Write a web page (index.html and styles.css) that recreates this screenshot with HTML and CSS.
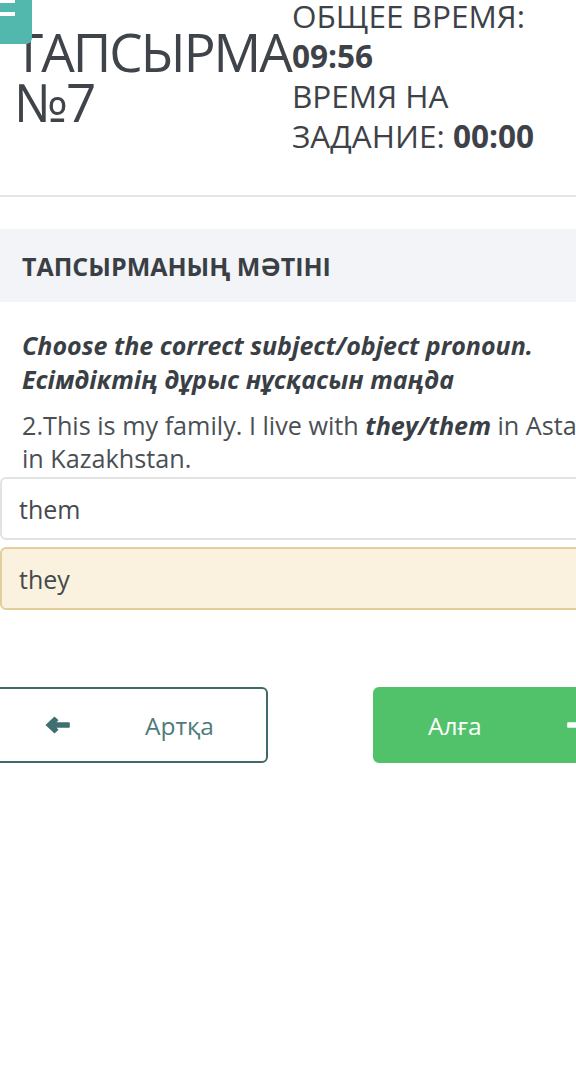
FILE: index.html
```html
<!DOCTYPE html>
<html lang="kk">
<head>
<meta charset="utf-8">
<title>Тапсырма №7</title>
<link rel="stylesheet" href="styles.css">
</head>
<body>
<button class="menu-btn" aria-label="Menu"><span class="bar bar-a"></span><span class="bar bar-b"></span></button>
<div class="page">
  <header class="header">
    <h1 class="title">ТАПСЫРМА №7</h1>
    <div class="timers">
      <div>ОБЩЕЕ ВРЕМЯ: <b>09:56</b></div>
      <div>ВРЕМЯ НА ЗАДАНИЕ: <b>00:00</b></div>
    </div>
  </header>

  <section class="task">
    <div class="task-head">ТАПСЫРМАНЫҢ МӘТІНІ</div>
    <p class="instruction">Choose the correct subject/object pronoun.<br>Есімдіктің дұрыс нұсқасын таңда</p>
    <p class="question">2.This is my family. I live with <b><i>they/them</i></b> in Astana in Kazakhstan.</p>
  </section>

  <div class="options">
    <div class="option">them</div>
    <div class="option selected">they</div>
  </div>

  <div class="nav">
    <button class="btn btn-back">
      <svg class="arrow" width="25" height="18" viewBox="0 0 25 18"><path d="M1.5 9 L9.5 1.5 L12.5 4.3 L9 7 H24 V11 H9 L12.5 13.7 L9.5 16.5 Z" fill="#3f6f71" stroke="#3f6f71" stroke-width="1.6" stroke-linejoin="round"/></svg>
      <span>Артқа</span>
    </button>
    <button class="btn btn-next">
      <span>Алға</span>
      <svg class="arrow" width="25" height="18" viewBox="0 0 25 18"><path d="M23.5 9 L15.5 1.5 L12.5 4.3 L16 7 H1 V11 H16 L12.5 13.7 L15.5 16.5 Z" fill="#ffffff" stroke="#ffffff" stroke-width="1.6" stroke-linejoin="round"/></svg>
    </button>
  </div>
</div>
</body>
</html>
```

FILE: styles.css
```css
html, body {
  margin: 0;
  padding: 0;
  background: #ffffff;
  overflow: hidden;
}
body {
  font-family: "Open Sans", "Noto Sans", sans-serif;
  color: #3d4248;
  width: 576px;
  height: 1074px;
}
.page {
  width: 640px;
}
.menu-btn {
  position: absolute;
  top: 0;
  left: 0;
  width: 32px;
  height: 44px;
  padding: 0;
  border: 0;
  background: #52b8ae;
  border-bottom-right-radius: 6px;
  z-index: 5;
}
.menu-btn .bar {
  position: absolute;
  left: 0;
  width: 15px;
  background: #ffffff;
}
.bar-a { top: 0; height: 3px; }
.bar-b { top: 12px; height: 4px; }

.header {
  display: grid;
  grid-template-columns: 278px 270px;
  padding-left: 14px;
  height: 195px;
  border-bottom: 2px solid #e5e5e5;
}
.title {
  margin: 27px 0 0;
  font-size: 53px;
  letter-spacing: -2px;
  line-height: 50px;
  font-weight: 400;
  color: #3f444a;
}
.timers {
  margin-top: -4px;
  font-size: 31.5px;
  line-height: 40px;
  color: #3d4248;
}
.timers b {
  font-weight: 700;
}

.task {
  margin-top: 32px;
}
.task-head {
  background: #f3f4f7;
  height: 73px;
  padding: 0 22px;
  display: flex;
  align-items: center;
  font-size: 25px;
  font-weight: 700;
  color: #3a3f45;
}
.instruction {
  margin: 26px 22px 0;
  font-size: 25px;
  line-height: 34px;
  font-weight: 700;
  font-style: italic;
  color: #3a3f45;
}
.question {
  margin: 13px 22px 0;
  font-size: 25.2px;
  line-height: 33px;
  color: #4a4f55;
}
.question b {
  color: #3a3f45;
}

.options {
  margin-top: 2px;
  display: flex;
  flex-direction: column;
  gap: 7px;
}
.option {
  height: 59px;
  border: 2px solid #e2e2e2;
  border-radius: 6px;
  padding: 0 17px;
  display: flex;
  align-items: center;
  font-size: 25px;
  color: #45494e;
  background: #ffffff;
}
.option.selected {
  background: #faf1de;
  border-color: #e2cf9c;
}

.nav {
  margin: 77px 0 0 -12px;
  display: flex;
  gap: 105px;
}
.btn {
  flex: 0 0 280px;
  width: 280px;
  height: 76px;
  border-radius: 6px;
  display: flex;
  align-items: center;
  justify-content: flex-start;
  font-family: "Open Sans", "Noto Sans", sans-serif;
  font-size: 24.5px;
  padding: 0;
  box-sizing: border-box;
}
.btn-back {
  background: #ffffff;
  border: 2px solid #41686b;
  color: #4f7b7e;
  padding-left: 55px;
  gap: 75px;
}
.btn-next {
  background: #51c26a;
  border: 2px solid #51c26a;
  color: #ffffff;
  padding-left: 53px;
  gap: 85px;
}
.arrow {
  display: block;
  flex: none;
}
```
